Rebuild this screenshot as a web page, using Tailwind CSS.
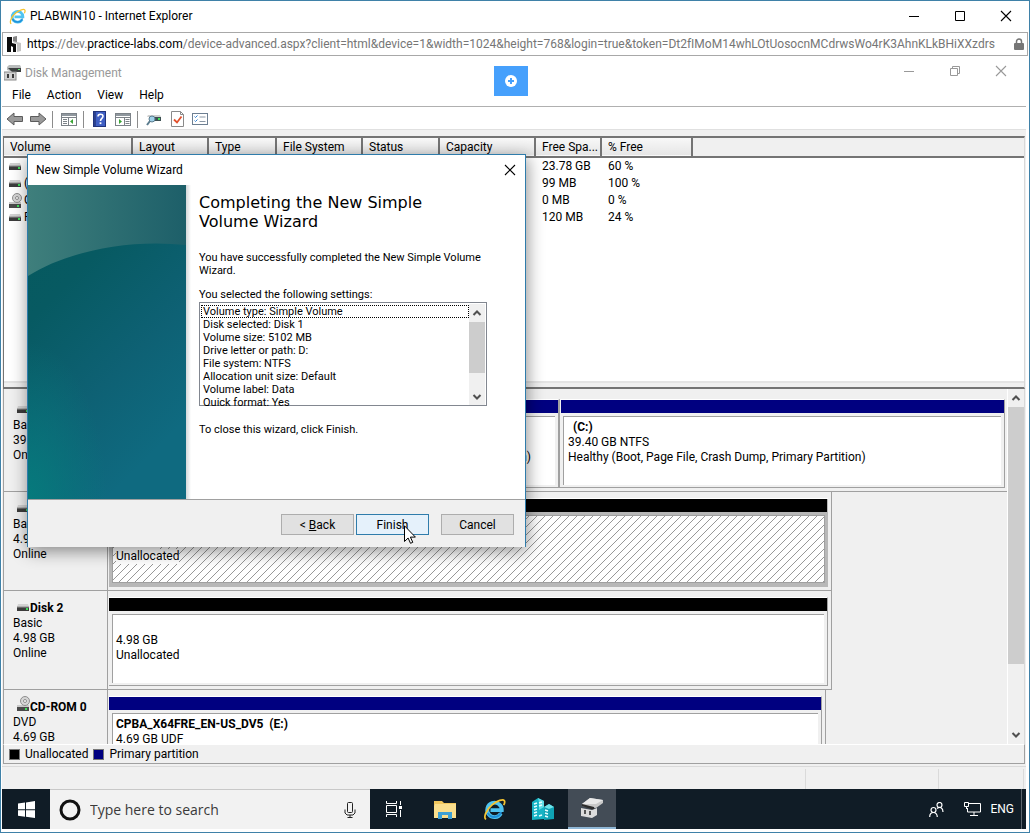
<!DOCTYPE html>
<html lang="en">
<head>
  <meta charset="UTF-8">
  <meta name="viewport" content="width=device-width, initial-scale=1.0">
  <title>PLABWIN10 - Internet Explorer</title>
  <!-- Tailwind CSS CDN -->
  <script src="https://cdn.jsdelivr.net/npm/@tailwindcss/browser@4"></script>
</head>
<body class="h-screen overflow-hidden bg-white font-[Roboto,'Open_Sans',sans-serif] text-xs text-black">

  <!-- Shared icons -->
  <svg class="hidden">
    <symbol id="drive" viewBox="0 0 14 14">
      <path d="M2 3h10l1 3H1z" fill="#d2d2d2"/>
      <rect x="1" y="5" width="12" height="1" fill="#b0b0b0"/>
      <rect x="1" y="6" width="12" height="4" fill="#3c3c3c"/>
      <rect x="1" y="6" width="12" height="1" fill="#6a6a6a"/>
      <rect x="10" y="7" width="2" height="2" fill="#3fe05a"/>
    </symbol>
    <symbol id="cdrom" viewBox="0 0 14 16">
      <path d="M1 9h12v2H1z" fill="#c9c9c9"/>
      <circle cx="9" cy="5" r="4.5" fill="#d6d6d6" stroke="#8e8e8e"/>
      <circle cx="9" cy="5" r="1.5" fill="#fff" stroke="#8e8e8e"/>
      <rect x="1" y="11" width="12" height="4" fill="#4a4a4a"/>
      <rect x="9" y="12" width="2" height="2" fill="#3fe05a"/>
    </symbol>
    <symbol id="ie" viewBox="0 0 24 24">
      <path d="M18.6 16.2A7.6 7.6 0 1 1 19.6 12.6H7.8" fill="none" stroke="#4fc3f0" stroke-width="4"/>
      <path d="M19 14.8A7.6 7.6 0 0 1 5 15.5" fill="none" stroke="#1f8fd8" stroke-width="2"/>
      <path d="M3.2 22.3C.2 20.500 3 12.500 9.500 7.200C15 2.600 21 .8 22.300 2.800C23 4 22.500 5.800 21.600 7.400" fill="none" stroke="#f5c431" stroke-width="1.800"/>
    </symbol>
    <symbol id="chevUp" viewBox="0 0 10 8"><path d="M1.500 6 5 2.500 8.500 6" fill="none" stroke="#505050" stroke-width="2"/></symbol>
    <symbol id="chevDown" viewBox="0 0 10 8"><path d="M1.500 2 5 5.500 8.500 2" fill="none" stroke="#505050" stroke-width="2"/></symbol>
    <symbol id="close" viewBox="0 0 12 12"><path d="M1 1l10 10M11 1L1 11" fill="none" stroke="currentColor" stroke-width="1.100"/></symbol>
  </svg>

  <div class="flex h-full flex-col border border-[#3f81a8] pl-px">

    <!-- Browser title bar -->
    <header class="flex h-[31px] shrink-0 items-center pb-px pl-[7px] pr-[17px]">
      <svg class="size-[17px]"><use href="#ie"/></svg>
      <h1 class="ml-1 flex-1">PLABWIN10 - Internet Explorer</h1>
      <div class="flex items-center gap-[34px]">
        <button type="button" aria-label="Minimize"><svg class="block size-3" viewBox="0 0 12 12"><path d="M1 6.500h10" stroke="#000"/></svg></button>
        <button type="button" aria-label="Maximize"><svg class="block size-3" viewBox="0 0 12 12"><path d="M1.500 1.500h9v9h-9z" fill="none" stroke="#000"/></svg></button>
        <button type="button" aria-label="Close"><svg class="block size-3"><use href="#close"/></svg></button>
      </div>
    </header>

    <!-- Address bar -->
    <div class="mr-px flex h-6 shrink-0 items-center border border-[#a8a8a8] pl-1 pr-[3px]">
      <svg class="h-4 w-[14px] shrink-0" viewBox="0 0 14 16"><path d="M0 1h5v6l4 1v8H6v-5l-2-1v6H0z" fill="#0c0c0c"/><path d="M6 1l4-1v6l4 1v8l-4 1V8L6 6z" fill="#c4c4c4"/><path d="M6 1l4-1v6L6 5z" fill="#848484"/></svg>
      <p class="ml-[6px] flex-1 overflow-hidden whitespace-nowrap text-[#767676]"><span class="text-black">https</span>://dev.<span class="text-black">practice-labs.com</span>/device-advanced.aspx?client=html&amp;device=1&amp;width=1024&amp;height=768&amp;login=true&amp;token=Dt2fIMoM14whLOtUosocnMCdrwsWo4rK3AhnKLkBHiXXzdrs</p>
      <svg class="h-3 w-[10px] shrink-0" viewBox="0 0 10 12"><path d="M2.500 6V3.500a2.500 2.500 0 0 1 5 0V6" fill="none" stroke="#767676" stroke-width="1.500"/><rect y="5" width="10" height="7" rx="1" fill="#767676"/></svg>
    </div>

    <!-- Remote desktop -->
    <main class="relative mr-[3px] flex min-h-0 flex-1 flex-col">

      <div class="flex h-7 shrink-0 items-center pl-[2px] pr-[19px] pt-[5px] text-[#999]">
        <svg class="h-4 w-[17px]" viewBox="0 0 17 16"><path d="M3 2l2-2h11l1 2v4H6L3 5z" fill="#b9bcbc"/><path d="M4 3h13v4H8z" fill="#3b3f3f"/><rect x="14" y="4" width="2" height="1" fill="#5fe070"/><rect y="7" width="12" height="8" fill="#d2d2d2" stroke="#8a8a8a"/><path d="M3 9h2v4H3zM8 9h2v4H8z" fill="#3a3a3a"/></svg>
        <h2 class="ml-1 flex-1">Disk Management</h2>
        <div class="-mt-1 flex items-center gap-[34px]">
          <button type="button" aria-label="Minimize"><svg class="block size-3" viewBox="0 0 12 12"><path d="M1 6.500h10" stroke="#999"/></svg></button>
          <button type="button" aria-label="Restore"><svg class="block size-3" viewBox="0 0 12 12"><path d="M1.500 3.500h7v7h-7zM3.500 3V1.500h7v7H9" fill="none" stroke="#999"/></svg></button>
          <button type="button" aria-label="Close"><svg class="block size-3"><use href="#close"/></svg></button>
        </div>
      </div>

      <nav class="flex h-[22px] shrink-0 items-center gap-4 pl-[10px]">
        <a href="#">File</a>
        <a href="#">Action</a>
        <a href="#">View</a>
        <a href="#">Help</a>
      </nav>

      <!-- Toolbar -->
      <div class="flex h-6 shrink-0 items-center border-b border-t border-b-[#e0e0e0] border-t-[#b0b0b0] pl-1 pt-[2px]">
        <button type="button" aria-label="Back"><svg class="block h-4 w-[18px]" viewBox="0 0 18 16"><path d="M1 8l7-6v3.500h8.500v5H8V14z" fill="#9a9a9a" stroke="#5c5c5c"/></svg></button>
        <button type="button" aria-label="Forward" class="ml-[5px]"><svg class="block h-4 w-[18px]" viewBox="0 0 18 16"><path d="M17 8l-7-6v3.500H1.500v5H10V14z" fill="#9a9a9a" stroke="#5c5c5c"/></svg></button>
        <span class="ml-[5px] h-[17px] w-px bg-[#8c8c8c]"></span>
        <button type="button" aria-label="Show console tree" class="ml-2"><svg class="block h-4 w-4" viewBox="0 0 16 16"><rect x=".5" y="2.500" width="15" height="12" fill="#fff" stroke="#7c8288"/><path d="M1 3h14v2H1z" fill="#8f979e"/><path d="M1 6.500h14M7.500 6v8" stroke="#7c8288"/><path d="M2 8.500h4M2 10.500h4M2 12.500h4" stroke="#7c8288"/><path d="M12 8v5l-3-2.500z" fill="#3aa335"/></svg></button>
        <span class="ml-[6px] h-[17px] w-px bg-[#8c8c8c]"></span>
        <button type="button" aria-label="Help" class="ml-[9px]"><svg class="block h-4 w-[13px]" viewBox="0 0 13 16"><rect x=".5" y=".5" width="12" height="15" fill="#3f5fc4" stroke="#20337c"/><path d="M1 1h2v14H1z" fill="#2b418f"/><path d="M5 5.500C5 2.500 10 2.500 10 5.300C10 7.300 7.500 7.500 7.500 10" fill="none" stroke="#fff" stroke-width="1.600"/><rect x="6.600" y="11.300" width="1.800" height="1.800" fill="#fff"/></svg></button>
        <button type="button" aria-label="Show action pane" class="ml-[9px]"><svg class="block h-4 w-4" viewBox="0 0 16 16"><rect x=".5" y="2.500" width="15" height="12" fill="#fff" stroke="#7c8288"/><path d="M1 3h14v2H1z" fill="#8f979e"/><path d="M1 6.500h14M9.500 6v8" stroke="#7c8288"/><path d="M10.500 8.500h4M10.500 10.500h4M10.500 12.500h4" stroke="#7c8288"/><path d="M4 8v5l3-2.500z" fill="#3aa335"/></svg></button>
        <span class="ml-[6px] h-[17px] w-px bg-[#8c8c8c]"></span>
        <button type="button" aria-label="Refresh" class="ml-2"><svg class="block h-4 w-4" viewBox="0 0 16 16"><path d="M2 4h12l1 2H1z" fill="#d0d0d0"/><rect x="4" y="6" width="11" height="4" fill="#3c5052"/><rect x="12" y="7" width="2" height="2" fill="#3fe05a"/><circle cx="6" cy="8" r="3" fill="#9fd0e8" stroke="#5b7c8e"/><path d="M4 10l-3 4" stroke="#5b7c8e" stroke-width="2"/></svg></button>
        <button type="button" aria-label="Properties" class="ml-[9px]"><svg class="block h-4 w-[13px]" viewBox="0 0 13 16"><path d="M.5.500h9l3 3v12H.5z" fill="#fff" stroke="#8a8a8a"/><path d="M9.500.5v3h3" fill="none" stroke="#8a8a8a"/><path d="M3 8.500l3 3 4.500-6" fill="none" stroke="#e2502c" stroke-width="1.800"/></svg></button>
        <button type="button" aria-label="Task list" class="ml-2"><svg class="block h-4 w-4" viewBox="0 0 16 16"><rect x=".5" y="2.500" width="15" height="11" fill="#fff" stroke="#6d7f92"/><path d="M2.500 5.500l1 1 2-2M2.500 9.500l1 1 2-2" fill="none" stroke="#2f7fd0"/><path d="M7.500 6h6M7.500 10.500h6" stroke="#8a97a5"/></svg></button>
      </div>

      <div class="flex min-h-0 flex-1 flex-col bg-[#f0f0f0] pt-[6px]">

        <!-- Volume list -->
        <section class="mx-px flex h-[253px] shrink-0 flex-col border-b-2 border-l border-r border-t-2 border-b-[#747474] border-l-[#747474] border-r-[#d8d8d8] border-t-[#747474] bg-white">
          <div class="flex-1 overflow-hidden">
            <table class="w-full table-fixed border-collapse text-left">
              <colgroup><col class="w-32"><col class="w-19"><col class="w-17"><col class="w-[86px]"><col class="w-[77px]"><col class="w-24"><col class="w-[66px]"><col class="w-[91px]"><col></colgroup>
              <thead>
                <tr class="h-[19px] border-b-2 border-[#747474] bg-linear-to-b from-[#f8f8f8] to-[#e6e6e6] leading-[17px] *:border-r-2 *:border-[#747474] *:py-0 *:pl-[6px] *:font-normal *:last:border-r-0">
                  <th>Volume</th><th>Layout</th><th>Type</th><th>File System</th><th>Status</th><th>Capacity</th><th class="whitespace-nowrap">Free Spa...</th><th>% Free</th><th class="bg-[#f0f0f0]"></th>
                </tr>
              </thead>
              <tbody class="leading-[17px] [&_td]:overflow-hidden [&_td]:whitespace-nowrap [&_td]:py-0 [&_td]:pl-[7px]">
                <tr><td><svg class="-ml-[3px] block size-[14px]"><use href="#drive"/></svg></td><td></td><td></td><td></td><td></td><td></td><td>23.78 GB</td><td>60 %</td><td></td></tr>
                <tr><td><div class="flex items-center gap-[2px]"><svg class="-ml-[3px] size-[14px] shrink-0"><use href="#drive"/></svg>(D:)</div></td><td></td><td></td><td></td><td></td><td></td><td>99 MB</td><td>100 %</td><td></td></tr>
                <tr><td><div class="flex items-center gap-[2px]"><svg class="-ml-[3px] h-4 w-[14px] shrink-0"><use href="#cdrom"/></svg>CPBA</div></td><td></td><td></td><td></td><td></td><td></td><td>0 MB</td><td>0 %</td><td></td></tr>
                <tr><td><div class="flex items-center gap-[2px]"><svg class="-ml-[3px] size-[14px] shrink-0"><use href="#drive"/></svg>Rec</div></td><td></td><td></td><td></td><td></td><td></td><td>120 MB</td><td>24 %</td><td></td></tr>
              </tbody>
            </table>
          </div>
          <div class="h-[6px] shrink-0 border-t-2 border-[#e4e4e4] bg-[#f0f0f0]"></div>
        </section>

        <!-- Graphical view -->
        <section class="mx-px flex min-h-0 flex-1 border-l border-r border-l-[#a0a0a0] border-r-[#d8d8d8]">
          <div class="min-w-0 flex-1 overflow-hidden border-r border-white pt-1 leading-[15px]">

            <!-- Disk 0 -->
            <div class="flex h-[99px]">
              <div class="w-[104px] shrink-0 border-b border-r border-[#a0a0a0] pl-[9px] pt-[10px]">
                <div class="flex"><svg class="ml-[3px] size-[14px]"><use href="#drive"/></svg><b>Disk 0</b></div>
                <p>Basic</p><p>39.98 GB</p><p>Online</p>
              </div>
              <div class="flex flex-1 border-b border-[#a0a0a0] pb-[3px] pl-px pr-[2px] pt-[6px]">
                <div class="flex flex-[450] flex-col border-b border-r-2 border-[#a0a0a0] border-t border-t-white">
                  <div class="h-[13px] bg-[#000080]"></div>
                  <div class="mb-[2px] ml-[3px] mr-[3px] mt-[3px] flex-1 border-l border-t border-[#a0a0a0] bg-white pt-[33px] pr-[24px] text-right">Healthy (EFI System Partition)</div>
                </div>
                <div class="flex flex-[445] flex-col border-b border-r border-[#a0a0a0] border-t border-t-white">
                  <div class="ml-px h-[13px] bg-[#000080]"></div>
                  <div class="mb-[2px] ml-[3px] mr-[3px] mt-[3px] flex-1 border-l border-t border-[#a0a0a0] bg-white pl-1 pt-[3px]">
                    <b class="pl-[5px]">(C:)</b><p>39.40 GB NTFS</p><p>Healthy (Boot, Page File, Crash Dump, Primary Partition)</p>
                  </div>
                </div>
              </div>
            </div>

            <!-- Disk 1 -->
            <div class="flex h-[99px]">
              <div class="w-[104px] shrink-0 border-b border-r border-[#a0a0a0] pl-[9px] pt-[10px]">
                <div class="flex"><svg class="ml-[3px] size-[14px]"><use href="#drive"/></svg><b>Disk 1</b></div>
                <p>Basic</p><p>4.98 GB</p><p>Online</p>
              </div>
              <div class="flex flex-[720] border-b border-r border-[#a0a0a0] pb-[3px] pl-px pr-[3px] pt-[6px]">
                <div class="flex flex-1 flex-col border-t border-white bg-[#b8b8b8]">
                  <div class="mr-px h-[13px] bg-black"></div>
                  <div class="relative mb-[4px] ml-[3px] mr-[3px] mt-[3px] flex-1 border border-[#a0a0a0] bg-white pl-[3px] pt-[18px]">
                    <svg class="absolute inset-0 size-full" shape-rendering="crispEdges"><defs><pattern id="hatch" width="8" height="8" patternUnits="userSpaceOnUse"><path d="M0 7h1v1H0zM1 6h1v1H1zM2 5h1v1H2zM3 4h1v1H3zM4 3h1v1H4zM5 2h1v1H5zM6 1h1v1H6zM7 0h1v1H7z" fill="#989898"/></pattern></defs><rect width="100%" height="100%" fill="url(#hatch)"/></svg>
                    <p class="relative w-max bg-white">4.98 GB</p><p class="relative w-max bg-white">Unallocated</p>
                  </div>
                </div>
              </div>
              <div class="flex-[175]"></div>
            </div>

            <!-- Disk 2 -->
            <div class="flex h-[99px]">
              <div class="w-[104px] shrink-0 border-b border-r border-[#a0a0a0] pl-[9px] pt-[10px]">
                <div class="flex"><svg class="ml-[3px] size-[14px]"><use href="#drive"/></svg><b>Disk 2</b></div>
                <p>Basic</p><p>4.98 GB</p><p>Online</p>
              </div>
              <div class="flex flex-[720] border-b border-r border-[#a0a0a0] pb-[3px] pl-px pr-[3px] pt-[6px]">
                <div class="flex flex-1 flex-col border-b border-r border-[#a0a0a0] border-t border-t-white">
                  <div class="h-[13px] bg-black"></div>
                  <div class="mb-[2px] ml-[3px] mr-[3px] mt-[3px] flex-1 border-l border-t border-[#a0a0a0] bg-white pl-[3px] pt-[18px]">
                    <p>4.98 GB</p><p>Unallocated</p>
                  </div>
                </div>
              </div>
              <div class="flex-[175]"></div>
            </div>

            <!-- CD-ROM 0 -->
            <div class="flex h-[99px]">
              <div class="w-[104px] shrink-0 border-r border-[#a0a0a0] pl-[9px] pt-[10px]">
                <div class="flex"><svg class="-mt-1 ml-[3px] h-4 w-[14px]"><use href="#cdrom"/></svg><b>CD-ROM 0</b></div>
                <p>DVD</p><p>4.69 GB</p>
              </div>
              <div class="flex flex-[714] border-r border-[#a0a0a0] pb-[3px] pl-px pr-[3px] pt-[6px]">
                <div class="flex flex-1 flex-col border-r border-[#a0a0a0] border-t border-t-white">
                  <div class="h-[13px] bg-[#000080]"></div>
                  <div class="mb-[2px] ml-[3px] mr-[3px] mt-[3px] flex-1 border-l border-t border-[#a0a0a0] bg-white pl-[3px] pt-[3px]">
                    <b>CPBA_X64FRE_EN-US_DV5&nbsp; (E:)</b><p>4.69 GB UDF</p>
                  </div>
                </div>
              </div>
              <div class="flex-[181]"></div>
            </div>
          </div>

          <!-- Scroll bar -->
          <div class="flex w-4 flex-col items-center">
            <svg class="my-[5px] h-2 w-[10px]"><use href="#chevUp"/></svg>
            <div class="h-[257px] w-full bg-[#cdcdcd]"></div>
            <svg class="mb-[5px] mt-auto h-2 w-[10px]"><use href="#chevDown"/></svg>
          </div>
        </section>

        <!-- Legend -->
        <div class="mx-px flex h-5 shrink-0 items-center border-b border-l border-r border-t border-[#a0a0a0] border-t-white pl-[5px]">
          <span class="size-[11px] border border-[#777] bg-black"></span><span class="ml-[5px]">Unallocated</span>
          <span class="ml-[5px] size-[11px] border border-[#777] bg-[#000080]"></span><span class="ml-[5px]">Primary partition</span>
        </div>

        <!-- Status bar -->
        <div class="mt-[2px] flex h-[23px] shrink-0 border-t border-[#dadada] pt-[2px]">
          <div class="flex-1 border-r border-[#dadada]"></div>
          <div class="w-[133px] border-r border-[#dadada]"></div>
          <div class="w-[85px] border-r border-[#dadada]"></div>
          <div class="w-[2px]"></div>
        </div>
      </div>

      <!-- Taskbar -->
      <footer class="mb-[3px] flex h-10 shrink-0 bg-[#101c26] text-white">
        <button type="button" aria-label="Start" class="flex w-12 items-center justify-center"><svg class="size-[17px]" viewBox="0 0 17 17"><path d="M0 2.500l7-1v6.700H0zM8 1.400L17 0v8.200H8zM0 9.200h7v6.600l-7-1zM8 9.200h9V17l-9-1.300z" fill="#fff"/></svg></button>
        <label class="flex w-80 items-center border-t border-[#c8c8c8] bg-[#f2f2f2] pl-[9px] pr-[14px] text-[#2b2b2b]">
          <svg class="size-[22px]" viewBox="0 0 22 22"><circle cx="11" cy="11" r="9" fill="none" stroke="#111" stroke-width="3"/></svg>
          <input type="text" aria-label="Search" placeholder="Type here to search" class="ml-[9px] min-w-0 flex-1 bg-transparent font-['Open_Sans',sans-serif] text-sm outline-none placeholder:text-[#3a3a3a]">
          <svg class="h-4 w-3" viewBox="0 0 12 16"><rect x="3.500" y=".5" width="5" height="10" rx="1" fill="none" stroke="#222"/><path d="M1 7.500v3.500l2 2h6l2-2V7.500M6 13v2.500M3.500 15.500h5" fill="none" stroke="#222"/></svg>
        </label>
        <div class="flex gap-px">
          <button type="button" aria-label="Task view" class="mr-[2px] flex w-12 items-center justify-center"><svg class="size-4" viewBox="0 0 16 16"><path d="M.5 0v2.500h10V0M.5 16v-2.500h10V16M.5 4.500h10v7H.5zM14.500 0v4M14.500 9v7" fill="none" stroke="#fff"/><rect x="13" y="5" width="3" height="3" fill="#fff"/></svg></button>
          <button type="button" aria-label="File Explorer" class="flex w-12 items-center justify-center"><svg class="h-[19px] w-[22px]" viewBox="0 0 22 19"><path d="M0 1h8l2 2h12v15H0z" fill="#f2c75c"/><path d="M1 4h21v14H0V6z" fill="#fbdf8d"/><path d="M4 12h14v7h-4v-4H8v4H4z" fill="#3ea0d4"/></svg></button>
          <button type="button" aria-label="Internet Explorer" class="flex w-12 items-center justify-center"><svg class="size-[23px]"><use href="#ie"/></svg></button>
          <button type="button" aria-label="Server Manager" class="flex w-12 items-center justify-center"><svg class="size-[22px]" viewBox="0 0 22 22"><path d="M0 4l6-4 6 3v18l-12 1z" fill="#16b3c4"/><path d="M6 0l6 3v6l-5 3V4z" fill="#5fdde6"/><path d="M2 6l3-1M2 9l3-1M2 12l3-1M2 15l3-1M2 18l3-1M7 5l3-1M7 8l3-1M7 18l3-1" stroke="#e6feff" stroke-width="1.500"/><path d="M12 9l5-3 5 3v12l-10 1z" fill="#0fa3b5"/><path d="M12 9l5-3 5 3-5 2z" fill="#6fe3ea"/><path d="M13 12l3 1M13 15l3 1M13 18l3 1" stroke="#e6feff" stroke-width="1.500"/></svg></button>
          <button type="button" aria-label="Disk Management" class="flex w-12 items-center justify-center border-b-2 border-[#8fb7d6] bg-[#434c56]"><svg class="h-5 w-[22px]" viewBox="0 0 22 20"><path d="M1 6L9 0l13 2v3l-7 5L1 8z" fill="#c9c9c9"/><path d="M9 0l13 2-7 4L1 6z" fill="#e9e9e9"/><path d="M1 6l12 3v3L1 8z" fill="#2c2c2c"/><path d="M0 10l11 2 5-2v7l-5 3-11-2z" fill="#dcdcdc"/><path d="M3 12h2v4H3zM8 13h2v4H8z" fill="#555"/></svg></button>
        </div>
        <div class="ml-auto flex items-center">
          <svg class="size-[15px]" viewBox="0 0 15 15" fill="none" stroke="#fff" stroke-width="1.200"><circle cx="10.500" cy="3" r="2.500"/><circle cx="4.500" cy="8" r="2.500"/><path d="M.7 15c0-6 7.600-6 7.600 0M8 6.500c3-2.500 6-.5 6 3.500"/></svg>
          <svg class="ml-5 h-[14px] w-[17px]" viewBox="0 0 17 14" fill="none" stroke="#fff"><path d="M5 1.500h11.500v8.500H3.500V6M10 10v3.500M6 13.500h8M.5.500h4v4h-4zM2.500 4.500V7"/></svg>
          <span class="ml-[9px]">ENG</span>
          <span class="ml-[7px] mr-1 h-10 w-px bg-[#5b646c]"></span>
        </div>
      </footer>

      <!-- Connection bar tab -->
      <button type="button" aria-label="Show toolbar" class="absolute left-1/2 top-[10px] flex h-[30px] w-[34px] -translate-x-5 items-center justify-center bg-[#46a0fc]">
        <svg class="size-3" viewBox="0 0 12 12"><circle cx="6" cy="6" r="6" fill="#fff"/><path d="M6 3v6M3 6h6" stroke="#46a0fc" stroke-width="2"/></svg>
      </button>

      <!-- New Simple Volume Wizard -->
      <div role="dialog" aria-labelledby="wizardTitle" class="absolute left-[25px] top-[98px] flex h-[393px] w-[499px] flex-col border border-[#2f7cab] bg-white shadow-[1px_4px_16px_rgba(0,0,0,0.45)]">
        <div class="flex h-[30px] shrink-0 items-center pl-2 pr-[9px]">
          <span id="wizardTitle" class="flex-1">New Simple Volume Wizard</span>
          <button type="button" aria-label="Close"><svg class="block size-3"><use href="#close"/></svg></button>
        </div>
        <div class="flex flex-1 text-[11px] leading-[13px]">
          <svg class="h-full w-[158px] shrink-0" viewBox="0 0 158 314" preserveAspectRatio="none">
            <defs>
              <linearGradient id="banner" x1="0" y1="0" x2=".5" y2="1"><stop offset="0" stop-color="#06595c"/><stop offset=".35" stop-color="#075a62"/><stop offset=".7" stop-color="#0e6174"/><stop offset="1" stop-color="#0f6a80"/></linearGradient>
              <linearGradient id="swoosh" x1="0" y1="0" x2="1" y2="0"><stop offset="0" stop-color="#3f7f7c"/><stop offset="1" stop-color="#1d5f69"/></linearGradient>
              <radialGradient id="glow" cx="0" cy="1" r=".5"><stop offset="0" stop-color="#067a7c"/><stop offset="1" stop-color="#067a7c" stop-opacity="0"/></radialGradient>
            </defs>
            <rect width="158" height="314" fill="url(#banner)"/>
            <rect width="158" height="314" fill="url(#glow)"/>
            <path d="M0 0h158v60C100 54 40 66 0 91z" fill="url(#swoosh)"/>
          </svg>
          <div class="w-[5px] bg-linear-to-r from-[#d4d8da] to-white"></div>
          <div class="flex-1 pl-2 pr-[38px] pt-2">
            <h3 class="pr-8 font-['DejaVu_Sans',Verdana,sans-serif] text-[16px] leading-[19px]">Completing the New Simple Volume Wizard</h3>
            <p class="mt-5">You have successfully completed the New Simple Volume Wizard.</p>
            <label for="settings" class="mt-[11px] block">You selected the following settings:</label>
            <div class="mt-px flex h-[104px] border border-[#828790] pt-px pr-px">
              <select id="settings" size="8" class="mt-px h-full min-w-0 flex-1 overflow-hidden pl-px outline-none [&_option]:h-[13px] [&_option]:min-h-0 [&_option]:px-[2px] [&_option]:py-0 [&_option]:leading-[13px]">
                <option class="outline-1 -outline-offset-1 outline-dotted outline-black">Volume type: Simple Volume</option>
                <option>Disk selected: Disk 1</option>
                <option>Volume size: 5102 MB</option>
                <option>Drive letter or path: D:</option>
                <option>File system: NTFS</option>
                <option>Allocation unit size: Default</option>
                <option>Volume label: Data</option>
                <option>Quick format: Yes</option>
              </select>
              <div class="flex w-4 flex-col items-center bg-[#f0f0f0]">
                <svg class="my-[5px] h-2 w-[10px]"><use href="#chevUp"/></svg>
                <div class="h-[51px] w-full bg-[#cdcdcd]"></div>
                <svg class="mb-1 mt-auto h-2 w-[10px]"><use href="#chevDown"/></svg>
              </div>
            </div>
            <p class="mt-[17px]">To close this wizard, click Finish.</p>
          </div>
        </div>
        <div class="flex h-[48px] shrink-0 justify-end border-t border-[#a0a0a0] bg-[#f0f0f0] pr-[11px] pt-[14px]">
          <button type="button" class="h-[21px] w-[73px] border border-[#adadad] bg-[#e1e1e1]">&lt; <u>B</u>ack</button>
          <button type="button" class="ml-[2px] h-[21px] w-[73px] border border-[#2f7cab] bg-[#e5f1fb]">Finish</button>
          <button type="button" class="ml-3 h-[21px] w-[73px] border border-[#adadad] bg-[#e1e1e1]">Cancel</button>
        </div>
        <!-- Mouse pointer -->
        <svg class="absolute left-[376px] top-[370px] h-[19px] w-3" viewBox="0 0 12 19"><path d="M.5.800v15.700l3.600-3.500 2.400 5.300 2.300-1-2.400-5.200h5z" fill="#fff" stroke="#000"/></svg>
      </div>
    </main>
  </div>
</body>
</html>
